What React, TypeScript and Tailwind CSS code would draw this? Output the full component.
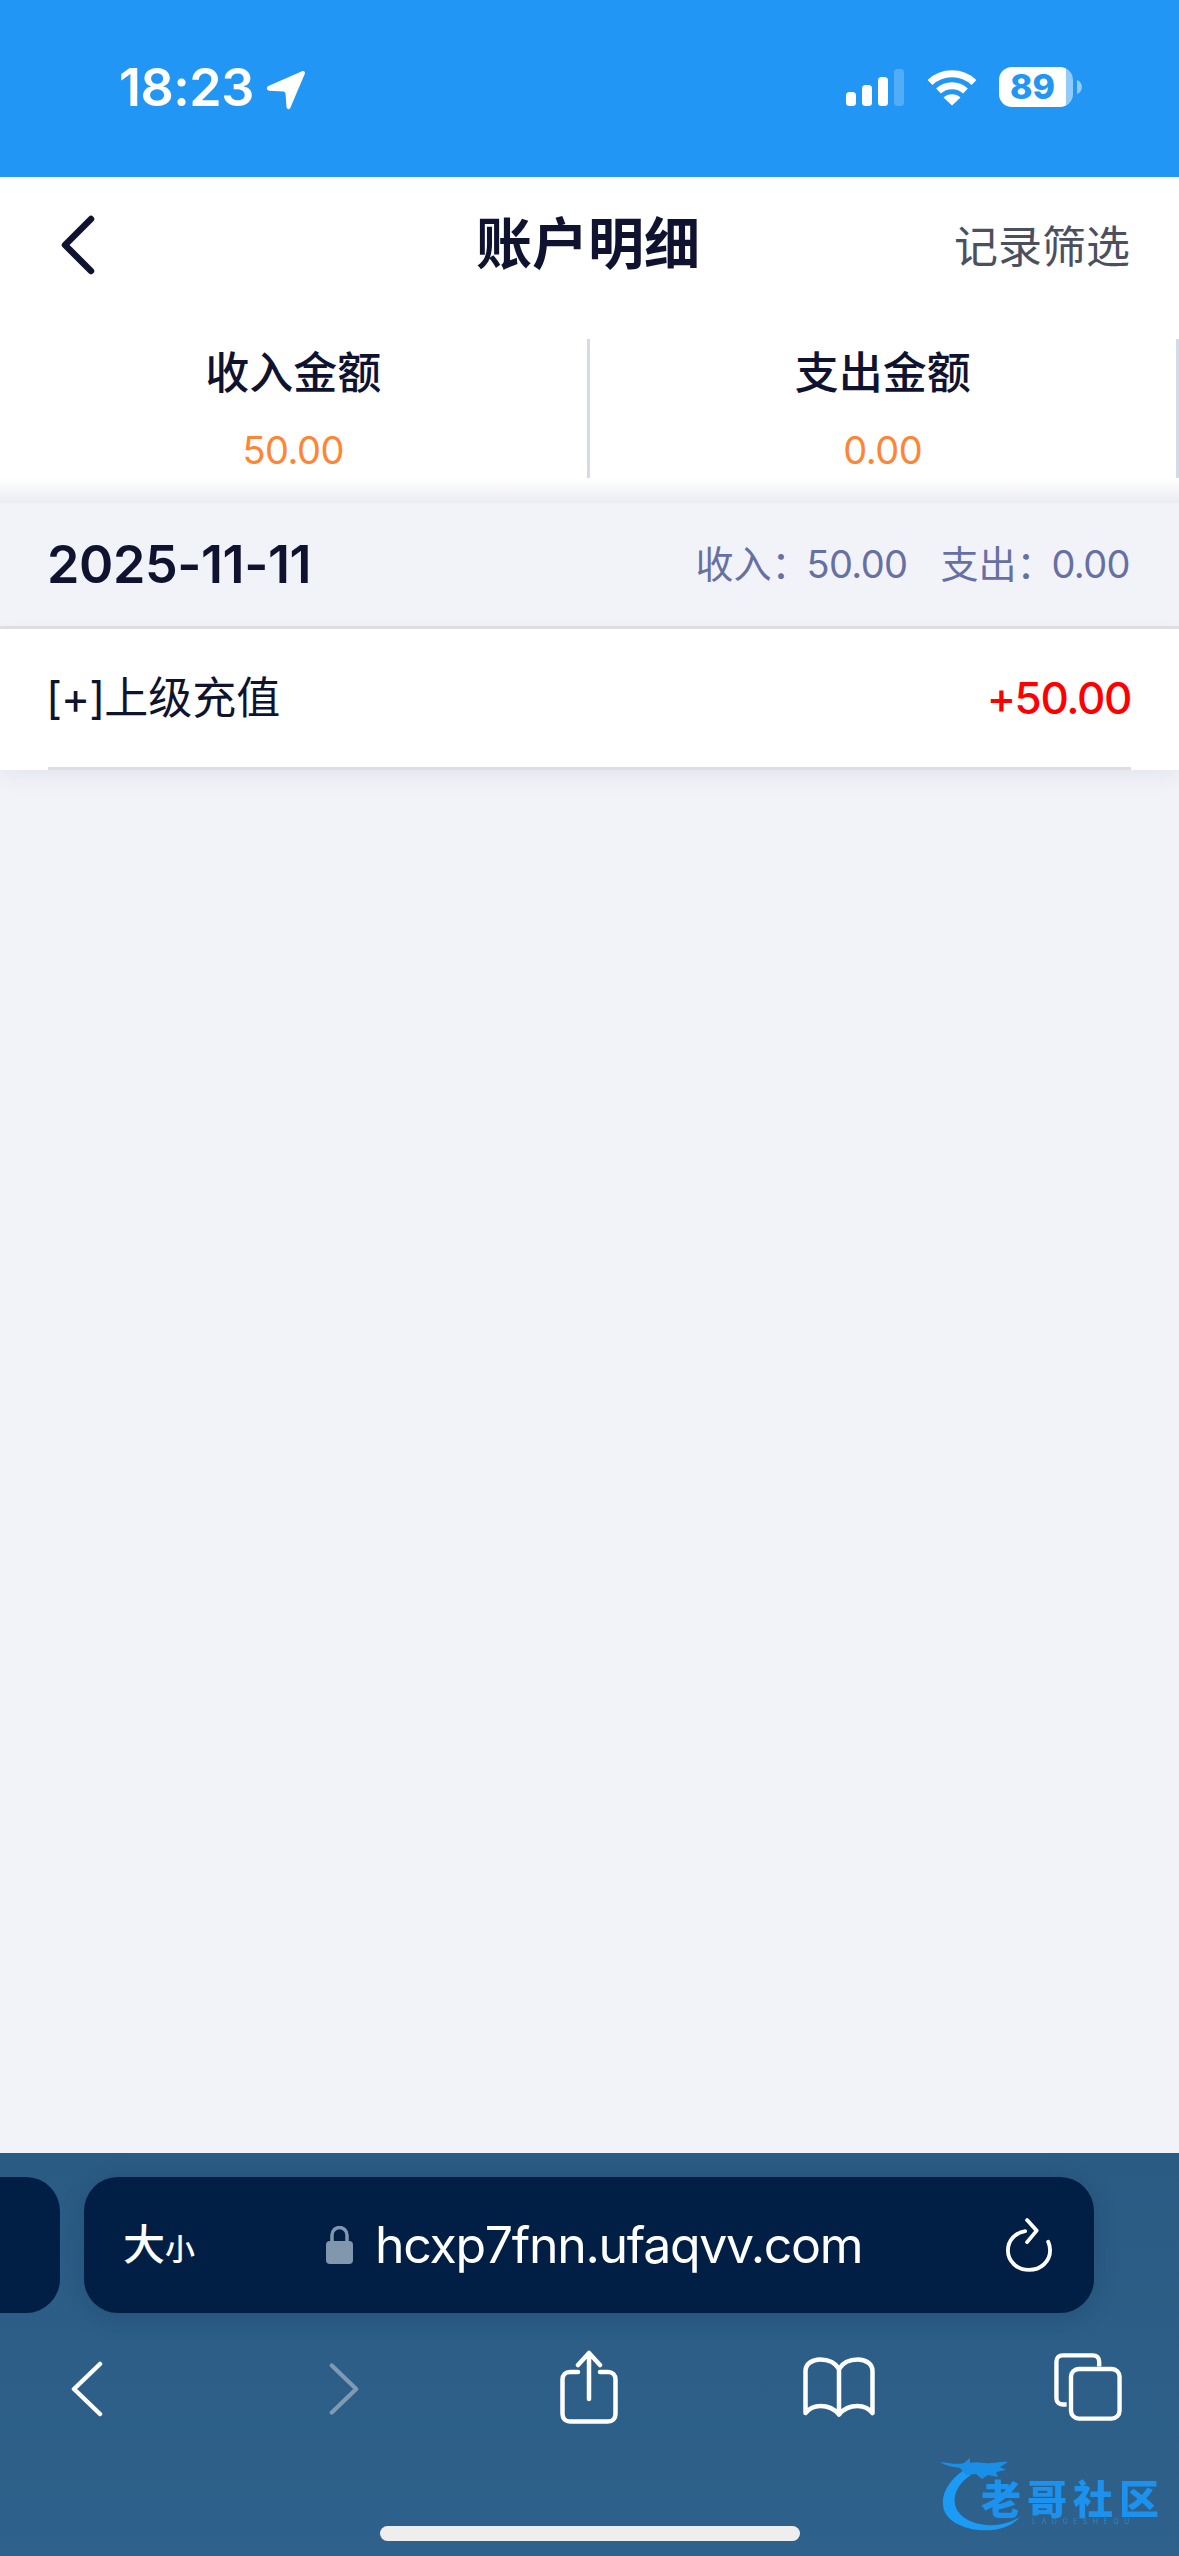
export default function App() {
  return (
    <div className="flex h-[2556px] w-[1179px] flex-col overflow-hidden bg-[#f2f3f9] font-['Inter','Noto_Sans_CJK_SC',sans-serif] relative">
      <StatusBar />

      {/* Header */}
      <div className="h-[301px] bg-white">
        <div className="flex h-[162px] items-start justify-between pl-[60px] pr-[49px]">
          <svg className="mt-[38px] h-[60px] w-[36px]" viewBox="0 0 36 60" fill="none">
            <path d="M31 4 5 30l26 26" stroke="#0f1330" strokeWidth="6.5" strokeLinecap="round" strokeLinejoin="round" />
          </svg>
          <div className="mt-[31px] ml-[126px] text-[56px] leading-[72px] font-bold text-[#0f1330]">账户明细</div>
          <div className="mt-[42px] text-[44px] leading-[56px] text-[#4b5060]">记录筛选</div>
        </div>
        <div className="grid grid-cols-2">
          <Stat label="收入金额" value="50.00" />
          <Stat label="支出金额" value="0.00" />
        </div>
      </div>
      <div className="h-[25px] bg-gradient-to-b from-white to-[#ebecf2]" />

      {/* Day summary */}
      <div className="flex h-[126px] items-center justify-between border-b-[3px] border-[#e0e1e4] bg-[#f2f3f9] pl-[47px] pr-[49px]">
        <div className="text-[52px] font-semibold tracking-[-0.4px] text-[#0f1330]">2025-11-11</div>
        <div className="flex items-center text-[38px] text-[#6670a3]">
          <span>收入：</span>
          <span className="ml-[-3px] tracking-[-0.6px]">50.00</span>
          <span className="ml-[33px]">支出：</span>
          <span className="ml-[-3px] tracking-[-0.6px]">0.00</span>
        </div>
      </div>

      {/* Record */}
      <div className="relative z-10 bg-white px-[48px] shadow-[0_6px_20px_rgba(40,50,90,0.07)]">
        <div className="flex h-[141px] items-center justify-between border-b-[3px] border-[#dddee2]">
          <div className="text-[44px] text-[#0f1330]">
            <span className="ml-[-2px] tracking-[-1px]">[+]</span>上级充值
          </div>
          <div className="text-[44px] font-medium tracking-[-1.4px] text-[#ff0000]">+50.00</div>
        </div>
      </div>

      <div className="flex-1" />

      <Toolbar />
      <Watermark />
    </div>
  );
}

function Stat({ label, value }: { label: string; value: string }) {
  return (
    <div className="flex h-[139px] flex-col items-center border-r-[3px] border-[#d5dae8]">
      <div className="mt-[6px] text-[44px] leading-[56px] font-medium text-[#0f1330]">{label}</div>
      <div className="mt-[25px] text-[38px] leading-[48px] tracking-[-0.5px] text-[#ff8534]">{value}</div>
    </div>
  );
}

function StatusBar() {
  return (
    <div className="flex h-[177px] items-start justify-between bg-[#2196f5] pl-[119px] pr-[97px]">
      <div className="mt-[57px] flex items-center">
        <span className="text-[52px] leading-[62px] font-semibold tracking-[-0.5px] text-white">18:23</span>
        <svg className="ml-[12px] mt-[3px] h-[40px] w-[40px]" viewBox="0 0 40 40" fill="white">
          <path d="M36 1.200c1.800-.9 3.300.5 2.900 2.300L24.500 37.500c-.7 2.500-3.800 2.200-4-.4l-1-13.500c-.1-1.300-1-2.100-2.200-2.200L3.300 20.700c-2.700-.2-3.300-3.500-1-4.700Z" />
        </svg>
      </div>
      <div className="mt-[67px] flex items-center">
        <svg className="h-[37px] w-[58px]" viewBox="0 0 58 37" fill="white">
          <rect x="0" y="23" width="10" height="14" rx="3.500" />
          <rect x="16" y="16" width="10" height="21" rx="3.500" />
          <rect x="32" y="8" width="10" height="29" rx="3.500" />
          <rect x="48" y="0" width="10" height="37" rx="3.500" opacity="0.22" />
        </svg>
        <svg className="ml-[23px] h-[38px] w-[50px]" viewBox="0 0 50 38" fill="none" stroke="white" strokeWidth="7">
          <path d="M3 14.500a32 32 0 0 1 44 0" />
          <path d="M11.500 23a20 20 0 0 1 27 0" />
          <path d="M25 37.500 16.500 29.500a13 13 0 0 1 17 0Z" fill="white" stroke="none" />
        </svg>
        <div className="ml-[22px] flex items-center">
          <div className="flex h-[40px] w-[74px] items-center justify-center rounded-[13px] bg-[linear-gradient(90deg,#ffffff_67px,#90cbfa_67px)] pr-[7px] text-[34px] leading-[40px] font-extrabold text-[#2196f5]">89</div>
          <svg className="ml-[4px] h-[14px] w-[5px]" viewBox="0 0 5 14" fill="white" opacity="0.5">
            <path d="M0 0c3 1 5 4 5 7s-2 6-5 7Z" />
          </svg>
        </div>
      </div>
    </div>
  );
}

function Toolbar() {
  return (
    <div className="h-[403px] bg-gradient-to-b from-[#2a5b83] to-[#2e618b] pt-[24px]">
      <div className="flex items-stretch">
        <div className="h-[136px] w-[60px] rounded-r-[34px] bg-[#011f44]" />
        <div className="ml-[24px] flex h-[136px] w-[1010px] items-center rounded-[34px] bg-[#011f44] pl-[39px] pr-[42px] shadow-[0_4px_24px_rgba(0,20,50,0.15)]">
          <div className="flex w-[203px] items-baseline font-medium text-white">
            <span className="text-[42px] leading-none">大</span>
            <span className="text-[30px] leading-none">小</span>
          </div>
          <svg className="h-[38px] w-[27px]" viewBox="0 0 27 38" fill="none">
            <path d="M6 17V9a7.500 7.500 0 0 1 15 0v8" stroke="#8296ad" strokeWidth="3.500" />
            <rect x="0" y="15" width="27" height="23" rx="4" fill="#8296ad" />
          </svg>
          <div className="ml-[22px] flex-1 text-[50px] leading-[64px] tracking-[-1.3px] text-white">hcxp7fnn.ufaqvv.com</div>
          <svg className="h-[54px] w-[46px]" viewBox="0 0 48 56" fill="none" stroke="white" strokeWidth="4" strokeLinecap="round" strokeLinejoin="round">
            <path d="M20 13.500C9.500 15 2 23.500 2 33.500 2 45 11.500 54 24 54s22-9 22-20.500c0-3.500-.8-6.500-2-9" />
            <path d="M22 2 32 13 22 25" />
          </svg>
        </div>
      </div>

      <div className="mt-[37px] flex items-start pl-[71px]">
        <svg className="mt-[11px] h-[56px] w-[32px]" viewBox="0 0 32 56" fill="none" stroke="white" strokeWidth="4.500" strokeLinecap="round" strokeLinejoin="round">
          <path d="M29 3 3 28l26 25" />
        </svg>
        <svg className="ml-[226px] mt-[11px] h-[56px] w-[30px]" viewBox="0 0 32 56" fill="none" stroke="#7f9ab2" strokeWidth="4.500" strokeLinecap="round" strokeLinejoin="round">
          <path d="M3 3 29 28 3 53" />
        </svg>
        <svg className="ml-[201px] h-[74px] w-[58px]" viewBox="0 0 58 74" fill="none" stroke="white" strokeWidth="4.500" strokeLinecap="round" strokeLinejoin="round">
          <path d="M18 22H10c-4.500 0-7.500 3-7.500 7.500V64c0 4.500 3 7.500 7.500 7.500h38c4.500 0 7.500-3 7.500-7.500V29.500c0-4.500-3-7.500-7.500-7.500h-8" />
          <path d="M29 49V3M18 15 29 3l11 12" />
        </svg>
        <svg className="ml-[185px] mt-[7px] h-[60px] w-[72px]" viewBox="0 0 72 60" fill="none" stroke="white" strokeWidth="4.500" strokeLinecap="round" strokeLinejoin="round">
          <path d="M36 12C32 5 25 2.500 17 2.500 9 2.500 2.500 7 2.500 14v42c4-5 9-7 15-7 8 0 14 3 18.500 8.500C40.500 52 46.500 49 54.500 49c6 0 11 2 15 7V14c0-7-6.500-11.500-14.500-11.500C47 2.500 40 5 36 12Z" />
          <path d="M36 12v45" />
        </svg>
        <svg className="ml-[179px] mt-[3px] h-[68px] w-[68px]" viewBox="0 0 70 70" fill="none" stroke="white" strokeWidth="4.500" strokeLinejoin="round">
          <path d="M13 53H9c-4 0-6.500-2.500-6.500-6.500V9C2.500 5 5 2.500 9 2.500h31c4 0 6.500 2.500 6.500 6.500v5" />
          <rect x="17.500" y="16.500" width="50" height="51" rx="8" />
        </svg>
      </div>

      <div className="mx-auto mt-[102px] h-[15px] w-[420px] rounded-full bg-[#eeeeee]" />
    </div>
  );
}

function Watermark() {
  return (
    <div className="absolute left-[938px] top-[2458px] h-[76px] w-[230px] blur-[0.6px]">
      <svg className="absolute left-0 top-0 h-[76px] w-[110px]" viewBox="0 0 110 76" fill="none">
        <path d="M26 12C8 24 2 40 6 52c5 14 26 22 48 20 12-1 22-6 28-13-10 6-22 9-34 8C28 65 14 54 17 38c2-9 8-16 16-21Z" fill="#1c9bf5" />
        <path d="M2 4c10 1 18 3 24 1l6-5 0 5c8-2 14 1 20 0 6 0 12-2 18-1l-8 5 6 3-10 2 2 5-10-2-6 4-6-5-10 1-6-7C16 9 8 8 2 4Z" fill="#1a8fe8" />
      </svg>
      <div className="absolute left-[43px] top-[21px] whitespace-nowrap text-[40px] leading-[36px] font-black tracking-[6px] text-[#1c92ee] font-['Noto_Sans_CJK_SC',sans-serif]">老哥社区</div>
      <div className="absolute left-[94px] top-[59px] whitespace-nowrap text-[7px] leading-[9px] tracking-[5.500px] text-[#2a88cc]">LAOGESHEQU</div>
    </div>
  );
}
